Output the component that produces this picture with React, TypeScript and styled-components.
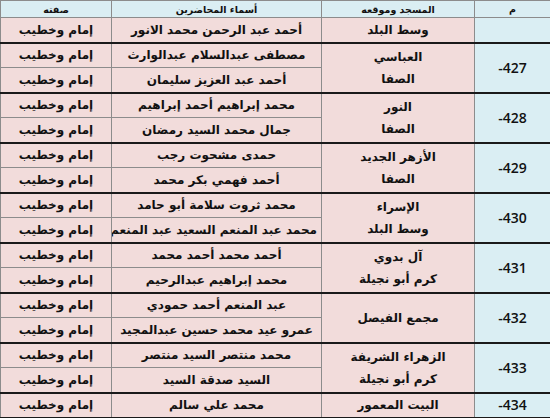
import React from "react";
import styled, { createGlobalStyle } from "styled-components";

const Global = createGlobalStyle`
  html, body { margin: 0; padding: 0; background: #ffffff; }
  body { font-family: "DejaVu Sans", "Noto Sans", sans-serif; }
`;

const Table = styled.table`
  width: 550px;
  border-collapse: collapse;
  table-layout: fixed;
  direction: rtl;
  color: #111;
`;

const HeadRow = styled.tr`
  height: 17px;
`;

const Th = styled.th`
  background: #daeef3;
  padding: 0;
  font-size: 9.5px;
  font-weight: bold;
  text-align: center;
  vertical-align: middle;
  border: 1px solid #8c8c8c;
`;

const Tr = styled.tr<{ $groupTop?: boolean }>`
  height: 25px;
  & > td {
    border-top: ${(p) => (p.$groupTop ? "2px solid #1a1a1a" : "1px solid #8c8c8c")};
  }
`;

const Cell = styled.td`
  padding: 0 4px;
  text-align: center;
  vertical-align: middle;
  white-space: nowrap;
  overflow: hidden;
  border-left: 1px solid #8c8c8c;
  border-right: 1px solid #8c8c8c;
  border-bottom: 1px solid #8c8c8c;
  font-size: 12px;
  font-weight: bold;
  line-height: 1;
`;

const NumCell = styled(Cell)`
  background: #daeef3;
  font-family: "Open Sans", "Liberation Sans", sans-serif;
  font-weight: 600;
  font-size: 14px;
`;

const MosqueCell = styled(Cell)`
  background: #f2dcdb;
`;

const MosqueLine = styled.div`
  line-height: 22px;
`;

const NameCell = styled(Cell)`
  background: #f2dcdb;
`;

const RoleCell = styled(Cell)`
  background: #f2dcdb;
`;

const Num = styled.span`
  direction: ltr;
  unicode-bidi: isolate;
`;

const LastRow = styled(Tr)`
  & > td {
    border-bottom: 2px solid #1a1a1a;
  }
`;

type Group = {
  num: string;
  mosque: string[];
  names: string[];
};

const ROLE = "إمام وخطيب";

const groups: Group[] = [
  { num: "", mosque: ["وسط البلد"], names: ["أحمد عبد الرحمن محمد الانور"] },
  { num: "-427", mosque: ["العباسي", "الصفا"], names: ["مصطفى عبدالسلام عبدالوارث", "أحمد عبد العزيز سليمان"] },
  { num: "-428", mosque: ["النور", "الصفا"], names: ["محمد إبراهيم أحمد إبراهيم", "جمال محمد السيد رمضان"] },
  { num: "-429", mosque: ["الأزهر الجديد", "الصفا"], names: ["حمدى مشحوت رجب", "أحمد فهمي بكر محمد"] },
  { num: "-430", mosque: ["الإسراء", "وسط البلد"], names: ["محمد ثروت سلامة أبو حامد", "محمد عبد المنعم السعيد عبد المنعم"] },
  { num: "-431", mosque: ["آل بدوي", "كرم أبو نجيلة"], names: ["أحمد محمد أحمد محمد", "محمد إبراهيم عبدالرحيم"] },
  { num: "-432", mosque: ["مجمع الفيصل"], names: ["عبد المنعم أحمد حمودي", "عمرو عيد محمد حسين عبدالمجيد"] },
  { num: "-433", mosque: ["الزهراء الشريفة", "كرم أبو نجيلة"], names: ["محمد منتصر السيد منتصر", "السيد صدقة السيد"] },
  { num: "-434", mosque: ["البيت المعمور"], names: ["محمد علي سالم"] },
];

export default function App() {
  return (
    <>
      <Global />
      <Table>
        <colgroup>
          <col style={{ width: 76 }} />
          <col style={{ width: 153 }} />
          <col style={{ width: 210 }} />
          <col style={{ width: 111 }} />
        </colgroup>
        <thead>
          <HeadRow>
            <Th>م</Th>
            <Th>المسجد وموقعه</Th>
            <Th>أسماء المحاضرين</Th>
            <Th>صفته</Th>
          </HeadRow>
        </thead>
        <tbody>
          {groups.map((g, gi) => {
            const isLast = gi === groups.length - 1;
            return g.names.map((name, i) => {
              const RowC = isLast ? LastRow : Tr;
              return (
                <RowC key={`${gi}-${i}`} $groupTop={i === 0 && gi > 0}>
                  {i === 0 && (
                    <>
                      <NumCell rowSpan={g.names.length}>
                        <Num>{g.num}</Num>
                      </NumCell>
                      <MosqueCell rowSpan={g.names.length}>
                        {g.mosque.map((m) => (
                          <MosqueLine key={m}>{m}</MosqueLine>
                        ))}
                      </MosqueCell>
                    </>
                  )}
                  <NameCell>{name}</NameCell>
                  <RoleCell>{ROLE}</RoleCell>
                </RowC>
              );
            });
          })}
        </tbody>
      </Table>
    </>
  );
}
